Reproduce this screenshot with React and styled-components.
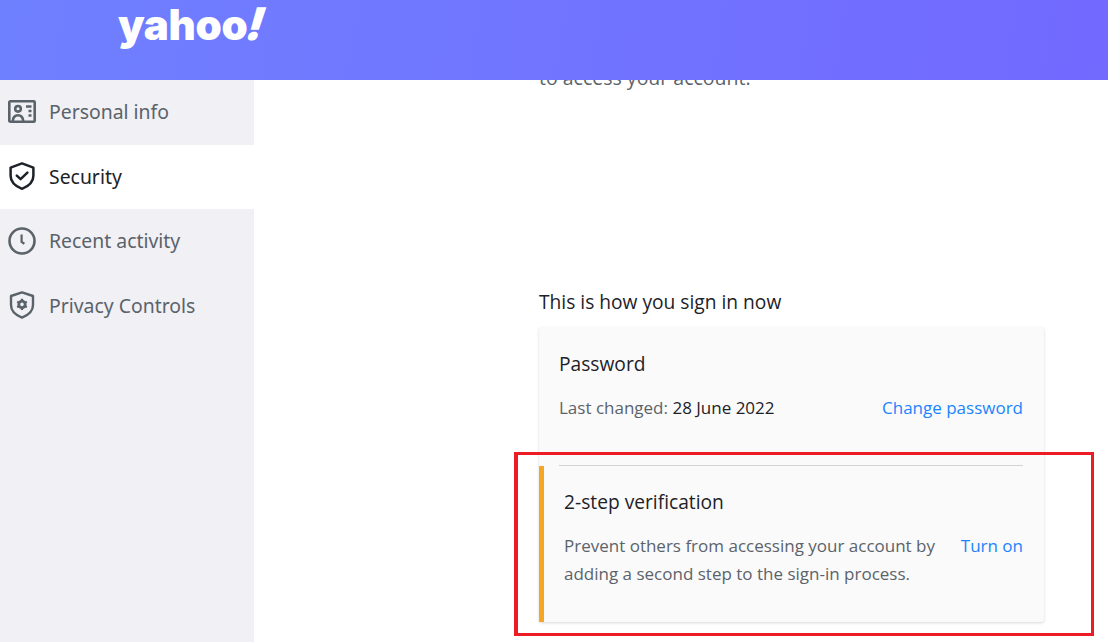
import React from 'react'
import styled, { createGlobalStyle } from 'styled-components'

const GlobalStyle = createGlobalStyle`
  html, body {
    margin: 0;
    height: 100%;
    overflow: hidden;
    background: #fff;
    font-family: "Open Sans", "Noto Sans", sans-serif;
  }
`

const Page = styled.div`
  position: relative;
  display: flex;
  flex-direction: column;
  width: 1108px;
  height: 642px;
  overflow: hidden;
`

const Header = styled.header`
  position: relative;
  flex: 0 0 80px;
  display: flex;
  align-items: flex-start;
  padding-left: 118px;
  background: linear-gradient(100deg, #6f80ff 0%, #7269ff 100%);
`

const Logo = styled.div`
  display: flex;
  align-items: baseline;
  color: #fff;
  font-family: "Inter", sans-serif;
  font-weight: 900;
  font-size: 42px;
  letter-spacing: -0.3px;
  line-height: 50px;
`

const LogoBang = styled.span`
  display: inline-block;
  margin-left: 1px;
  font-size: 45px;
  line-height: 40px;
  transform: skewX(-17deg);
`

const Body = styled.div`
  flex: 1;
  display: flex;
  min-height: 0;
`

const Sidebar = styled.nav`
  flex: 0 0 254px;
  background: #f0f0f5;
`

const NavItem = styled.div`
  display: flex;
  align-items: center;
  gap: 13px;
  height: 64.5px;
  box-sizing: border-box;
  padding: 0 0 0.6px 8px;
  font-family: "Noto Sans", sans-serif;
  font-size: 19.4px;
  color: ${p => (p.$active ? '#1d2228' : '#5b636a')};
  background: ${p => (p.$active ? '#fff' : 'transparent')};

  svg {
    flex: 0 0 28px;
    width: 28px;
    height: 28px;
  }
`

const Main = styled.main`
  flex: 1;
  min-width: 0;
  padding-left: 285px;
  overflow: hidden;
`

const Intro = styled.p`
  margin: -14px 0 0;
  font-size: 19.5px;
  line-height: 24px;
  color: #5b636a;
`

const Heading = styled.h2`
  margin: 200px 0 0;
  font-size: 19.2px;
  font-weight: 400;
  line-height: 24px;
  color: #1d2228;
`

const Card = styled.section`
  width: 505px;
  margin-top: 13px;
  background: #fafafa;
  border-radius: 3px;
  box-shadow: 0 1px 3px rgba(0, 0, 0, 0.16);
`

const PasswordBlock = styled.div`
  padding: 24px 21px 0 20px;
  height: 138px;
  box-sizing: border-box;
`

const CardTitle = styled.h3`
  margin: 0;
  font-size: 19.2px;
  font-weight: 400;
  line-height: 26px;
  color: #1d2228;
`

const Row = styled.div`
  display: flex;
  justify-content: space-between;
  align-items: baseline;
  margin-top: ${p => p.$gap}px;
`

const Meta = styled.div`
  font-size: 17px;
  line-height: 24px;
  color: #5b636a;

  b {
    font-weight: 400;
    color: #1d2228;
  }
`

const TextLink = styled.a`
  font-size: 17px;
  line-height: 24px;
  color: #1a84ff;
`

const Divider = styled.hr`
  margin: 0 21px 0 20px;
  border: 0;
  border-top: 1px solid #d3d3d6;
`

const WarnBlock = styled.div`
  height: 156px;
  box-sizing: border-box;
  padding: 23px 21px 0 20px;
  border-left: 5px solid #f5a623;
`

const Description = styled.p`
  width: 385px;
  margin: 0;
  font-size: 17px;
  line-height: 28px;
  color: #5b636a;
`

const Annotation = styled.div`
  position: absolute;
  left: 514px;
  top: 452px;
  width: 580px;
  height: 184px;
  box-sizing: border-box;
  border: 3px solid #ed1c24;
  border-left-width: 4px;
  pointer-events: none;
`

const CardIcon = () => (
  <svg viewBox="0 0 28 28" fill="none" stroke="#5b636a" strokeWidth="2.6">
    <rect x="1.300" y="3.300" width="25.400" height="20.400" rx="1" />
    <circle cx="10" cy="10.800" r="2.800" />
    <path d="M4.800 23c.3-3.900 2.400-5.800 5.200-5.800s4.900 1.900 5.200 5.800" />
    <path d="M18 8.500h5.500M20.500 13h3M20.500 17.500h3" />
  </svg>
)

const ShieldCheckIcon = () => (
  <svg viewBox="0 0 28 28" fill="none" stroke="#1d2228" strokeWidth="2.5" strokeLinejoin="round">
    <path d="M14 1.400 25.400 5.600v8.200c0 6-4.600 10.400-11.400 13-6.800-2.600-11.400-7-11.400-13V5.600z" />
    <path d="m8.800 13.600 3.800 3.600 6.800-6.600" strokeLinecap="round" />
  </svg>
)

const ClockIcon = () => (
  <svg viewBox="0 0 28 28" fill="none" stroke="#5b636a" strokeWidth="2.6">
    <circle cx="14" cy="14" r="12.500" />
    <path d="M13.600 7.500v7.500l2.800 1.800" strokeWidth="2.200" />
  </svg>
)

const ShieldGearIcon = () => (
  <svg viewBox="0 0 28 28" fill="none" stroke="#5b636a" strokeWidth="2.400" strokeLinejoin="round">
    <path d="M14 1.400 25 5v9c0 5.800-4.400 10-11 12.600C7.400 24 3 19.800 3 14V5z" />
    <circle cx="14" cy="13.400" r="3.200" strokeWidth="2.800" />
    <path
      d="M14 7.800v2.400M14 16.600v2.400M9.200 10.600l2 1.200M16.800 15l2 1.200M9.200 16.200l2-1.200M16.800 11.800l2-1.200"
      strokeWidth="2.200"
    />
  </svg>
)

const App = () => (
  <>
    <GlobalStyle />
    <Page>
      <Header>
        <Logo>
          yahoo<LogoBang>!</LogoBang>
        </Logo>
      </Header>
      <Body>
        <Sidebar>
          <NavItem>
            <CardIcon />
            Personal info
          </NavItem>
          <NavItem $active>
            <ShieldCheckIcon />
            Security
          </NavItem>
          <NavItem>
            <ClockIcon />
            Recent activity
          </NavItem>
          <NavItem>
            <ShieldGearIcon />
            Privacy Controls
          </NavItem>
        </Sidebar>
        <Main>
          <Intro>to access your account.</Intro>
          <Heading>This is how you sign in now</Heading>
          <Card>
            <PasswordBlock>
              <CardTitle>Password</CardTitle>
              <Row $gap={19}>
                <Meta>
                  Last changed: <b>28 June 2022</b>
                </Meta>
                <TextLink>Change password</TextLink>
              </Row>
            </PasswordBlock>
            <Divider />
            <WarnBlock>
              <CardTitle>2-step verification</CardTitle>
              <Row $gap={17}>
                <Description>
                  Prevent others from accessing your account by adding a second step to the
                  sign-in process.
                </Description>
                <TextLink>Turn on</TextLink>
              </Row>
            </WarnBlock>
          </Card>
        </Main>
      </Body>
      <Annotation />
    </Page>
  </>
)

export default App
